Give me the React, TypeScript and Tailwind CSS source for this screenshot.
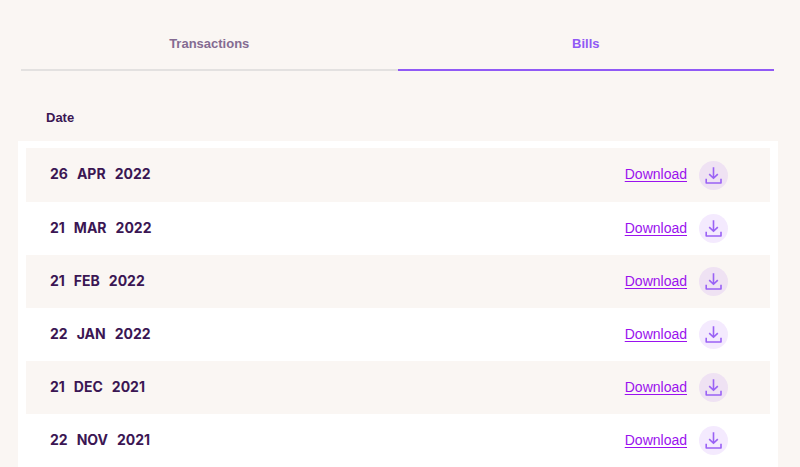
const bills: [string, string, string][] = [
  ["26", "APR", "2022"],
  ["21", "MAR", "2022"],
  ["21", "FEB", "2022"],
  ["22", "JAN", "2022"],
  ["21", "DEC", "2021"],
  ["22", "NOV", "2021"],
];

function DownloadIcon() {
  return (
    <svg
      className="size-[29px] shrink-0"
      viewBox="0 0 29 29"
      fill="none"
      stroke="#9a62f5"
      strokeWidth="1.6"
      strokeLinejoin="round"
      aria-hidden="true"
    >
      <circle cx="14.5" cy="14.5" r="14.5" fill="#a855f7" fillOpacity="0.12" stroke="none" />
      <path d="M14.5 6.2V17.2M10.2 13.1L14.5 17.3L18.8 13.1" />
      <path d="M7.2 17.8V22H22V17.8" />
    </svg>
  );
}

function BillRow({ date, index }: { date: [string, string, string]; index: number }) {
  const edge = index === 0 ? "border-t-[7px]" : "";
  const fill = index % 2 === 0 ? "bg-[#faf6f3]" : "bg-white";
  const height = index === 0 ? "h-[61px]" : "h-[53px]";
  return (
    <tr className={`${fill} ${height}`}>
      <td className={`border-l-8 border-white pl-6 ${edge}`}>
        <div className="flex gap-[9px] pb-0.5 font-['Inter','Liberation_Sans',sans-serif] text-sm font-bold">
          {date.map((part) => (
            <span key={part}>{part}</span>
          ))}
        </div>
      </td>
      <td className={`border-r-8 border-white pr-[42px] ${edge}`}>
        <a href="#download" className="flex items-center justify-end gap-3 text-sm text-[#9a12ee]">
          <span className="pb-0.5 underline underline-offset-2">Download</span>
          <DownloadIcon />
        </a>
      </td>
    </tr>
  );
}

export default function App() {
  return (
    <main className="h-screen overflow-hidden bg-[#faf6f3] pl-[18px] pr-[22px] font-['Liberation_Sans',Arial,sans-serif] text-[#3b1653]">
      <div role="tablist" className="ml-[3px] mr-1 grid grid-cols-2 text-[13px] leading-5 font-bold">
        <button
          role="tab"
          aria-selected="false"
          className="border-b-2 border-[#e3e1e0] pt-[34px] pb-[15px] text-[#846b92]"
        >
          Transactions
        </button>
        <button
          role="tab"
          aria-selected="true"
          className="border-b-2 border-[#9059f5] pt-[34px] pb-[15px] text-[#9059f5]"
        >
          Bills
        </button>
      </div>
      <table className="w-full border-separate border-spacing-0">
        <thead>
          <tr className="text-left text-[13px] leading-5">
            <th scope="col" className="pt-[37px] pb-[13px] pl-7 font-bold">
              Date
            </th>
            <td />
          </tr>
        </thead>
        <tbody>
          {bills.map((date, index) => (
            <BillRow key={date.join(" ")} date={date} index={index} />
          ))}
        </tbody>
      </table>
    </main>
  );
}
